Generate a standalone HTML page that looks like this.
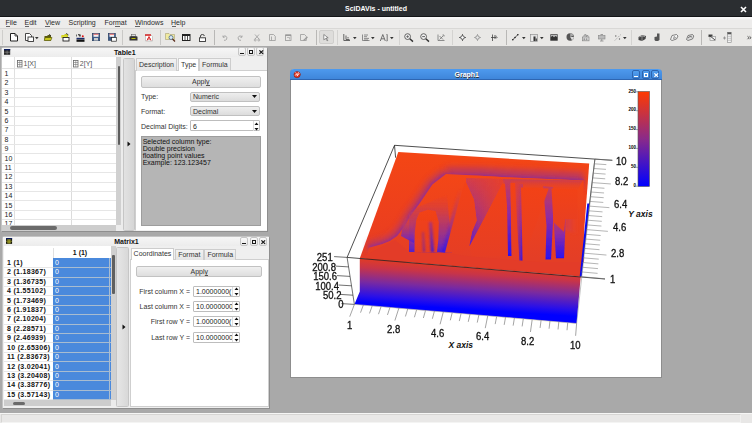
<!DOCTYPE html><html><head><meta charset="utf-8"><style>
*{box-sizing:border-box;margin:0;padding:0}
html,body{width:752px;height:423px;overflow:hidden;background:#a9a9a9;font-family:"Liberation Sans",sans-serif;font-size:7px;color:#222}
.a{position:absolute}
.t{position:absolute;white-space:nowrap;line-height:1}
.wbtn{position:absolute;border:1px solid #c6c6c6;border-radius:2px;background:linear-gradient(#fafafa,#e8e8e8)}
svg{position:absolute;overflow:visible}
</style></head><body>
<div class="a" style="left:0px;top:0px;width:752px;height:17px;background:#2b2e31"></div>
<div class="t" style="left:345px;top:5.30px;font-size:7px;font-weight:bold;color:#fff;">SciDAVis - untitled</div>
<svg style="left:740px;top:6px" width="7" height="7"><path d="M1 1L6 6M6 1L1 6" stroke="#fff" stroke-width="1.6"/></svg>
<div class="a" style="left:0px;top:17px;width:752px;height:11px;background:linear-gradient(#fafafa 0px,#f6f6f5 2px,#edeceb 3px)"></div>
<div class="a" style="left:0px;top:16px;width:752px;height:1px;background:#141618"></div>
<div class="t" style="left:5.5px;top:19.00px;font-size:7px;color:#2a2a2a;">File</div>
<div class="t" style="left:24.5px;top:19.00px;font-size:7px;color:#2a2a2a;">Edit</div>
<div class="t" style="left:45px;top:19.00px;font-size:7px;color:#2a2a2a;">View</div>
<div class="t" style="left:68.5px;top:19.00px;font-size:7px;color:#2a2a2a;">Scripting</div>
<div class="t" style="left:104.5px;top:19.00px;font-size:7px;color:#2a2a2a;">Format</div>
<div class="t" style="left:135px;top:19.00px;font-size:7px;color:#2a2a2a;">Windows</div>
<div class="t" style="left:171px;top:19.00px;font-size:7px;color:#2a2a2a;">Help</div>
<div class="a" style="left:5.5px;top:26px;width:4.0px;height:0.8px;background:#666"></div>
<div class="a" style="left:24.5px;top:26px;width:4.300000000000001px;height:0.8px;background:#666"></div>
<div class="a" style="left:45px;top:26px;width:5.299999999999997px;height:0.8px;background:#666"></div>
<div class="a" style="left:115px;top:26px;width:5.299999999999997px;height:0.8px;background:#666"></div>
<div class="a" style="left:135px;top:26px;width:5.300000000000011px;height:0.8px;background:#666"></div>
<div class="a" style="left:171.5px;top:26px;width:4.0px;height:0.8px;background:#666"></div>
<div class="a" style="left:0px;top:28px;width:752px;height:18px;background:#e9e8e6;border-top:1px solid #d9d8d6"></div>
<div class="a" style="left:2.3px;top:29.5px;width:1px;height:15px;background:#cfcecc"></div>
<svg style="left:9.5px;top:33px" width="8" height="8.5" viewBox="0 0 8 8.5"><path d="M0.5 0.5H5L7.5 3V8H0.5Z" fill="#fff" stroke="#222" stroke-width="1"/><path d="M5 0.5V3H7.5" fill="none" stroke="#222" stroke-width="0.8"/></svg>
<svg style="left:24.5px;top:33px" width="9" height="9" viewBox="0 0 9 9"><path d="M0.5 0.5H4.5L6.5 2.5V7.5H0.5Z" fill="#fff" stroke="#333" stroke-width="0.9"/><rect x="3" y="4" width="5.5" height="4.5" fill="#fff" stroke="#333" stroke-width="0.9"/></svg>
<svg style="left:34.5px;top:37px" width="4" height="2.5" viewBox="0 0 4 2.5"><path d="M0 0H3.6L1.8 2.2Z" fill="#333"/></svg>
<svg style="left:43.5px;top:34px" width="8.5" height="7" viewBox="0 0 8.5 7"><path d="M0.5 2H3L4 1H7V6.5H0.5Z" fill="#5a5a10"/><path d="M1 3.5H8L6.8 6.5H0.3Z" fill="#c8c820" stroke="#4a4a00" stroke-width="0.6"/><path d="M5 0.2L7 1.8" stroke="#333" stroke-width="0.8"/></svg>
<svg style="left:60.5px;top:33px" width="8.5" height="8.5" viewBox="0 0 8.5 8.5"><path d="M0.5 2H3L4 1H7V5H0.5Z" fill="#c8c820"/><path d="M0.5 2.5H6L5 5H0.5Z" fill="#e0e030"/><rect x="2" y="4.5" width="6" height="3.5" fill="#fff" stroke="#222" stroke-width="0.9"/><path d="M5 0.3L7.5 2" stroke="#333" stroke-width="0.8"/></svg>
<svg style="left:75.5px;top:33.5px" width="9" height="8" viewBox="0 0 9 8"><path d="M0.5 0.5V2.5M2 0.5H3.5V2.5M4.5 0.5V2.5" stroke="#333" stroke-width="0.7"/><circle cx="6.8" cy="2.2" r="1" fill="#e01010"/><rect x="0.5" y="3.8" width="8" height="1.5" fill="#1a2a6a"/><rect x="0.5" y="5.5" width="8" height="2.3" fill="#111"/></svg>
<svg style="left:92px;top:33.3px" width="8" height="8" viewBox="0 0 8 8"><rect x="0.3" y="0.3" width="7.4" height="7.4" fill="#3a5a8a" stroke="#233a5a" stroke-width="0.6"/><rect x="1.5" y="0.8" width="5" height="3" fill="#f4f0f0"/><rect x="1.5" y="0.8" width="5" height="0.8" fill="#e04040"/><rect x="2" y="5" width="4" height="2.5" fill="#ccc"/></svg>
<svg style="left:108px;top:33.3px" width="8.5" height="8.5" viewBox="0 0 8.5 8.5"><rect x="0.3" y="0.3" width="7" height="7" fill="#3a5a8a" stroke="#233a5a" stroke-width="0.6"/><rect x="1.5" y="0.8" width="4.6" height="3" fill="#f4f0f0"/><rect x="1.5" y="0.8" width="4.6" height="0.8" fill="#e04040"/><rect x="3.5" y="4.5" width="4.8" height="3.7" fill="#fff" stroke="#222" stroke-width="0.7"/></svg>
<div class="a" style="left:122.4px;top:29.5px;width:1px;height:15px;background:#c9c8c6"></div>
<svg style="left:128.5px;top:33.5px" width="9" height="7" viewBox="0 0 9 7"><rect x="2.5" y="0.3" width="4" height="2.5" fill="#ddd" stroke="#555" stroke-width="0.5"/><path d="M0.5 3Q0.5 2.3 1.5 2.3H7.5Q8.5 2.3 8.5 3V6.5H0.5Z" fill="#333"/><rect x="2.5" y="4" width="4" height="0.9" fill="#cc0"/></svg>
<svg style="left:145px;top:33.5px" width="8" height="7.5" viewBox="0 0 8 7.5"><path d="M0.5 0.5H5.5L7.5 2.5V7H0.5Z" fill="#fff" stroke="#aaa" stroke-width="0.6"/><rect x="0" y="0.3" width="6" height="1.5" fill="#d82020"/><path d="M2 6.5L4 2.5L6 6.5M2.5 5H5.5" stroke="#d82020" stroke-width="0.9" fill="none"/></svg>
<div class="a" style="left:159.5px;top:29.5px;width:1px;height:15px;background:#c9c8c6"></div>
<svg style="left:165px;top:32px" width="11" height="10" viewBox="0 0 11 10"><path d="M0.5 1.5H4L5 2.5H9.5V7.5H0.5Z" fill="#f0eaa0" stroke="#aaa070" stroke-width="0.6"/><circle cx="6" cy="5.5" r="2" fill="#d8e8f8" stroke="#4a6a8a" stroke-width="0.8"/><path d="M7.5 7L10 9.5" stroke="#5a2a1a" stroke-width="1.3"/></svg>
<svg style="left:181.8px;top:34px" width="8.5" height="7" viewBox="0 0 8.5 7"><rect x="0.5" y="0.5" width="7.5" height="6" fill="#fff" stroke="#222" stroke-width="1"/><rect x="0.5" y="0.5" width="7.5" height="1.5" fill="#222"/><path d="M3 2V6.5M5.5 2V6.5" stroke="#222" stroke-width="0.8"/></svg>
<svg style="left:198.8px;top:33.5px" width="7" height="8" viewBox="0 0 7 8"><path d="M1.5 3.5V2Q1.5 0.5 3.5 0.5Q5.3 0.5 5.3 2" fill="none" stroke="#333" stroke-width="0.9"/><rect x="0.5" y="3.8" width="6" height="3.7" fill="#fff" stroke="#333" stroke-width="0.9"/></svg>
<div class="a" style="left:213.7px;top:29.5px;width:1px;height:15px;background:#b9b8b6"></div>
<svg style="left:221.7px;top:34px" width="6" height="7" viewBox="0 0 6 7"><path d="M1 1.5L1 3.2L2.7 3.2" fill="none" stroke="#9a9a9a" stroke-width="0.8"/><path d="M1.2 3Q2.5 1.3 4 2.2Q5.5 3.5 4.5 5.5Q3.5 6.5 2 6.3" fill="none" stroke="#9a9a9a" stroke-width="0.8"/></svg>
<svg style="left:237px;top:34px" width="6" height="7" viewBox="0 0 6 7"><path d="M5 1.5L5 3.2L3.3 3.2" fill="none" stroke="#9a9a9a" stroke-width="0.8"/><path d="M4.8 3Q3.5 1.3 2 2.2Q0.5 3.5 1.5 5.5Q2.5 6.5 4 6.3" fill="none" stroke="#9a9a9a" stroke-width="0.8"/></svg>
<svg style="left:253.5px;top:34px" width="6" height="7.5" viewBox="0 0 6 7.5"><path d="M1 0.5L5 5M5 0.5L1 5" stroke="#9a9a9a" stroke-width="0.8"/><circle cx="1.2" cy="6" r="1" fill="none" stroke="#9a9a9a" stroke-width="0.7"/><circle cx="4.8" cy="6" r="1" fill="none" stroke="#9a9a9a" stroke-width="0.7"/></svg>
<svg style="left:269px;top:34px" width="7" height="7" viewBox="0 0 7 7"><path d="M0.5 0.5H4.5L6.3 2.3V6.5H0.5Z" fill="none" stroke="#9a9a9a" stroke-width="0.8"/><path d="M2.5 2.5V6.5" stroke="#9a9a9a" stroke-width="0.8"/></svg>
<svg style="left:284.8px;top:34px" width="6.5" height="7" viewBox="0 0 6.5 7"><rect x="0.5" y="1" width="5.5" height="5.5" fill="none" stroke="#9a9a9a" stroke-width="0.8"/><rect x="0.5" y="0.5" width="5.5" height="1.5" fill="#9a9a9a"/><path d="M2 3.5H4.5V5.5" stroke="#9a9a9a" stroke-width="0.6" fill="none"/></svg>
<svg style="left:300px;top:34px" width="8.5" height="7.5" viewBox="0 0 8.5 7.5"><path d="M0.5 0.5H4.5L6.3 2.3V6.5H0.5Z" fill="none" stroke="#9a9a9a" stroke-width="0.8"/><path d="M3.5 6.5L7.5 3" stroke="#9a9a9a" stroke-width="1.2"/></svg>
<div class="a" style="left:315.5px;top:29.5px;width:1px;height:15px;background:#b9b8b6"></div>
<div class="a" style="left:318.5px;top:29.7px;width:15.5px;height:14.5px;background:#dedddb;border:1px solid #cfcecc;border-radius:2px"></div>
<svg style="left:323.3px;top:34px" width="6" height="7" viewBox="0 0 6 7"><path d="M0.8 0.5L5.2 3.8L3.2 4L4.8 6.5L4 6.8L2.5 4.5L0.8 5.8Z" fill="#fff" stroke="#555" stroke-width="0.6"/></svg>
<div class="a" style="left:336.8px;top:29.5px;width:1px;height:15px;background:#d4d3d1"></div>
<svg style="left:343.3px;top:34px" width="7.5" height="7" viewBox="0 0 7.5 7"><path d="M0.8 0V6.5H7M3 1.5V5.5H6.5M5 3V4.5" fill="none" stroke="#555" stroke-width="0.9"/></svg>
<svg style="left:352.7px;top:36.5px" width="4" height="2.5" viewBox="0 0 4 2.5"><path d="M0 0H3.6L1.8 2.2Z" fill="#333"/></svg>
<svg style="left:361.9px;top:34px" width="7.5" height="7" viewBox="0 0 7.5 7"><path d="M0.5 0.5V6.5H7.5M2 1H6M2 2.7H5M2 4.4H7M2 6H6" fill="none" stroke="#666" stroke-width="0.7"/></svg>
<svg style="left:371.2px;top:36.5px" width="4" height="2.5" viewBox="0 0 4 2.5"><path d="M0 0H3.6L1.8 2.2Z" fill="#333"/></svg>
<svg style="left:380px;top:34px" width="7.5" height="7.5" viewBox="0 0 7.5 7.5"><path d="M0.3 7L2.8 0.5L5.3 7M1.2 4.8H4.4M6.5 0.5H7.2V7H6.5" fill="none" stroke="#555" stroke-width="0.8"/></svg>
<svg style="left:390.2px;top:36.5px" width="4" height="2.5" viewBox="0 0 4 2.5"><path d="M0 0H3.6L1.8 2.2Z" fill="#333"/></svg>
<div class="a" style="left:398.5px;top:29.5px;width:1px;height:15px;background:#d4d3d1"></div>
<svg style="left:404px;top:33px" width="10" height="9" viewBox="0 0 10 9"><circle cx="3.6" cy="3.6" r="2.9" fill="#f0f0f0" stroke="#555" stroke-width="0.9"/><path d="M2.2 3.6H5M3.6 2.2V5" stroke="#555" stroke-width="0.7"/><path d="M5.8 5.8L9 8.6" stroke="#333" stroke-width="1.4"/></svg>
<svg style="left:420px;top:33px" width="10" height="9" viewBox="0 0 10 9"><circle cx="3.6" cy="3.6" r="2.9" fill="#f0f0f0" stroke="#555" stroke-width="0.9"/><path d="M2.2 3.6H5" stroke="#555" stroke-width="0.9"/><path d="M5.8 5.8L9 8.6" stroke="#333" stroke-width="1.4"/></svg>
<svg style="left:437px;top:34px" width="8" height="7.5" viewBox="0 0 8 7.5"><path d="M1 0.5V6.5H7.5M2.5 2L6 5.5M6 2L2.5 5.5M5.5 1H7V2.5" fill="none" stroke="#666" stroke-width="0.7"/></svg>
<div class="a" style="left:451.6px;top:29.5px;width:1px;height:15px;background:#d4d3d1"></div>
<svg style="left:458.8px;top:33.5px" width="7" height="7" viewBox="0 0 7 7"><circle cx="3.5" cy="3.5" r="1.8" fill="#fff" stroke="#444" stroke-width="0.9"/><path d="M3.5 0V1.5M3.5 5.5V7M0 3.5H1.5M5.5 3.5H7" stroke="#444" stroke-width="0.8"/></svg>
<svg style="left:474.2px;top:33.5px" width="7.5" height="7" viewBox="0 0 7.5 7"><circle cx="3.5" cy="3.5" r="1.8" fill="#e8e8e8" stroke="#888" stroke-width="0.9"/><path d="M3.5 0V1.5M3.5 5.5V7M0 3.5H1.5M5.5 3.5H7" stroke="#999" stroke-width="0.8"/></svg>
<svg style="left:490px;top:33.5px" width="8" height="7.5" viewBox="0 0 8 7.5"><path d="M2.5 0.5V7M1 3.5H7.5M5 1V5" stroke="#444" stroke-width="0.8"/><path d="M4.5 2H6.5V4.5" stroke="#999" stroke-width="0.9" fill="none"/></svg>
<div class="a" style="left:505.7px;top:29.5px;width:1px;height:15px;background:#b9b8b6"></div>
<svg style="left:512.4px;top:34px" width="6.5" height="6.5" viewBox="0 0 6.5 6.5"><path d="M0.5 6L3 3.5L6 0.5" stroke="#333" stroke-width="0.8"/><circle cx="0.8" cy="5.8" r="0.8" fill="#222"/><circle cx="3" cy="3.5" r="0.8" fill="#222"/><circle cx="5.8" cy="0.8" r="0.8" fill="#222"/></svg>
<svg style="left:521.6px;top:36.5px" width="4" height="2.5" viewBox="0 0 4 2.5"><path d="M0 0H3.6L1.8 2.2Z" fill="#333"/></svg>
<svg style="left:530.4px;top:33.5px" width="8" height="7.7" viewBox="0 0 8 7.7"><rect x="0.4" y="0.4" width="7.2" height="7" fill="#ddd" stroke="#888" stroke-width="0.6"/><rect x="1.5" y="1.5" width="2" height="5.5" fill="#eee"/><rect x="3.5" y="2.5" width="2" height="4.5" fill="#333"/><rect x="5.5" y="4.5" width="1.5" height="2.5" fill="#555"/></svg>
<svg style="left:540.2px;top:36.5px" width="4" height="2.5" viewBox="0 0 4 2.5"><path d="M0 0H3.6L1.8 2.2Z" fill="#333"/></svg>
<svg style="left:550px;top:34px" width="8" height="7" viewBox="0 0 8 7"><rect x="0.3" y="0.3" width="7.4" height="6.4" fill="#333"/><path d="M0.8 1H7.2V3L5.5 2L4 3.2L2.5 1.8L0.8 3Z" fill="#bbb"/></svg>
<svg style="left:565.7px;top:33px" width="8.5" height="8" viewBox="0 0 8.5 8"><circle cx="4.2" cy="4" r="3.7" fill="#555"/><path d="M4.2 4L7.9 4A3.7 3.7 0 0 1 6 7.3Z" fill="#ddd"/><path d="M4.2 4L4.2 0.3A3.7 3.7 0 0 1 7.6 2.5Z" fill="#aaa"/></svg>
<svg style="left:581.9px;top:34px" width="7.5" height="7" viewBox="0 0 7.5 7"><rect x="0.5" y="3" width="6.5" height="3.8" fill="#ddd" stroke="#888" stroke-width="0.7"/><path d="M2 3V1L4 0.5V3M4.5 3V1.5H6V3" stroke="#888" stroke-width="0.7" fill="#ccc"/><rect x="1.5" y="4.3" width="1.5" height="2" fill="#999"/><rect x="3.8" y="4.3" width="1.5" height="2" fill="#999"/></svg>
<svg style="left:597.7px;top:34px" width="7.5" height="7.5" viewBox="0 0 7.5 7.5"><rect x="0.5" y="1.5" width="6.5" height="3.5" fill="#bbb" stroke="#888" stroke-width="0.6"/><path d="M3.75 5V7M2 7H5.5M2.5 0.5H5" stroke="#888" stroke-width="0.8"/></svg>
<svg style="left:613.5px;top:34px" width="7.5" height="7" viewBox="0 0 7.5 7"><path d="M0.8 6.5L6.8 0.5" stroke="#999" stroke-width="0.8" stroke-dasharray="1.5,1"/><circle cx="1.8" cy="2" r="0.7" fill="#666"/><circle cx="5.5" cy="5" r="0.7" fill="#666"/></svg>
<svg style="left:622.9000000000001px;top:36.5px" width="4" height="2.5" viewBox="0 0 4 2.5"><path d="M0 0H3.6L1.8 2.2Z" fill="#333"/></svg>
<div class="a" style="left:630.7px;top:29.5px;width:1px;height:15px;background:#d4d3d1"></div>
<svg style="left:637.7px;top:33.5px" width="8.5" height="7.5" viewBox="0 0 8.5 7.5"><path d="M0.5 3L4 1L8 2L7.5 5L4 7L0.5 6Z" fill="#444"/><path d="M1.5 3L4 1.8L7 2.5" stroke="#ddd" stroke-width="0.6" fill="none"/><path d="M4 2V7" stroke="#bbb" stroke-width="0.6"/></svg>
<svg style="left:654.3px;top:33px" width="6.5" height="8.5" viewBox="0 0 6.5 8.5"><path d="M3 0.5H5.5V7L4 8H1.5L0.5 7V4L3 3.5Z" fill="#555"/></svg>
<svg style="left:669.7px;top:34px" width="8.5" height="7" viewBox="0 0 8.5 7"><path d="M0.5 5.5L2 1.5L6.5 0.5L8 2L6.5 5L2 6.5Z" fill="#f4f4f4" stroke="#555" stroke-width="0.7"/><path d="M3.5 4.5L4.5 2M3.5 4.5L6 3.5" stroke="#555" stroke-width="0.6"/></svg>
<svg style="left:686px;top:34px" width="8" height="7" viewBox="0 0 8 7"><path d="M0.5 5.5L2 1.5L6.5 0.5L7.8 2L6.5 5L2 6.5Z" fill="#ddd" stroke="#555" stroke-width="0.7"/><path d="M2 4L4 2.5L6 3" stroke="#555" stroke-width="0.8" fill="none"/></svg>
<div class="a" style="left:701.3px;top:29.5px;width:1px;height:15px;background:#b9b8b6"></div>
<svg style="left:707.6px;top:34px" width="8.5" height="6.5" viewBox="0 0 8.5 6.5"><rect x="0.5" y="0.5" width="4" height="2.5" fill="#444"/><rect x="2" y="2.5" width="5.5" height="3.8" fill="#f0f0f0" stroke="#888" stroke-width="0.6"/><path d="M1.5 1.5L7 6" stroke="#222" stroke-width="0.8"/></svg>
<svg style="left:723.2px;top:32px" width="9" height="10.5" viewBox="0 0 9 10.5"><path d="M0 6H3M1.5 4.5V7.5" stroke="#888" stroke-width="0.8"/><rect x="4.5" y="0.3" width="3.7" height="10" fill="#f4f4f4" stroke="#888" stroke-width="0.6"/><rect x="4.5" y="0.3" width="3.7" height="2" fill="#555"/><path d="M4.5 4.3H8.2M4.5 6.3H8.2M4.5 8.3H8.2" stroke="#999" stroke-width="0.5"/></svg>
<svg style="left:746.5px;top:35.5px" width="5" height="3.5" viewBox="0 0 5 3.5"><path d="M0.5 0.3L2 1.7L0.5 3.2M2.5 0.3L4 1.7L2.5 3.2" fill="none" stroke="#333" stroke-width="0.8"/></svg>
<div class="a" style="left:0px;top:412.8px;width:752px;height:10.2px;background:#e8e7e6;border-top:1px solid #f6f6f5"></div>
<div class="a" style="left:1px;top:414px;width:740px;height:8.5px;border:1px solid #d6d5d3;border-bottom-color:#f4f4f3;border-right-color:#f0f0ef;background:#e9e8e7"></div>
<div class="a" style="left:1px;top:47px;width:267px;height:185px;background:#efefef;border:1px solid #c4c4c4;border-right-color:#8e8e8e;border-bottom-color:#8e8e8e;border-radius:3px 3px 0 0"></div>
<div class="a" style="left:2px;top:48px;width:265px;height:9px;background:linear-gradient(#f6f6f6,#ececec)"></div>
<div class="t" style="left:114px;top:48.80px;font-size:7px;font-weight:bold;color:#111;">Table1</div>
<svg style="left:3.8px;top:49px" width="6.2" height="5.8" viewBox="0 0 6.2 5.8"><rect x="0" y="0" width="6.2" height="5.8" fill="#2a2a2a"/><rect x="0" y="0" width="6.2" height="1.3" fill="#0a1a5a"/><path d="M0.3 3.2H5.9M3.1 1.5V5.5" stroke="#9a9a9a" stroke-width="0.6"/></svg>
<div class="wbtn" style="left:238px;top:47px;width:8.2px;height:8.8px;"></div>
<div class="a" style="left:240.1px;top:52.5px;width:3.9px;height:1.3px;background:#1a1a1a"></div>
<div class="wbtn" style="left:247px;top:47px;width:8.2px;height:8.8px;"></div>
<div class="a" style="left:249px;top:50px;width:4.2px;height:3.8px;border:1px solid #1a1a1a;border-top-width:1.5px"></div>
<div class="wbtn" style="left:256.3px;top:47px;width:8.2px;height:8.8px;"></div>
<svg style="left:258.6px;top:49.7px" width="4.5" height="4.3" viewBox="0 0 4.5 4.3"><path d="M0.4 0.4L4.1 3.9M4.1 0.4L0.4 3.9" stroke="#1a1a1a" stroke-width="1.3"/></svg>
<div class="a" style="left:2px;top:57px;width:114px;height:168px;background:#fff"></div>
<div class="a" style="left:2px;top:57px;width:114px;height:12px;background:#fff;border-bottom:1px solid #e2e2e2"></div>
<div class="a" style="left:14px;top:57px;width:1px;height:168px;background:#e0e0e0"></div>
<div class="a" style="left:71px;top:57px;width:1px;height:168px;background:#dcdcdc"></div>
<div class="t" style="left:23.5px;top:60.00px;font-size:7px;color:#555;">1[X]</div>
<div class="t" style="left:79.8px;top:60.00px;font-size:7px;color:#555;">2[Y]</div>
<svg style="left:17px;top:60px" width="5.5" height="7.5" viewBox="0 0 5.5 7.5"><rect x="0.5" y="0.5" width="4.5" height="6.5" fill="#fff" stroke="#666" stroke-width="0.8"/><path d="M2.75 0.5V7M0.5 2.5H5M0.5 4.5H5" stroke="#777" stroke-width="0.6"/></svg>
<svg style="left:73.3px;top:60px" width="5.5" height="7.5" viewBox="0 0 5.5 7.5"><rect x="0.5" y="0.5" width="4.5" height="6.5" fill="#fff" stroke="#666" stroke-width="0.8"/><path d="M2.75 0.5V7M0.5 2.5H5M0.5 4.5H5" stroke="#777" stroke-width="0.6"/></svg>
<div class="a" style="left:2px;top:78.3px;width:114px;height:1px;background:#e6e6e6"></div>
<div class="t" style="left:4.5px;top:70.10px;font-size:7px;color:#222;">1</div>
<div class="a" style="left:2px;top:87.69px;width:114px;height:1px;background:#e6e6e6"></div>
<div class="t" style="left:4.5px;top:79.49px;font-size:7px;color:#222;">2</div>
<div class="a" style="left:2px;top:97.08px;width:114px;height:1px;background:#e6e6e6"></div>
<div class="t" style="left:4.5px;top:88.88px;font-size:7px;color:#222;">3</div>
<div class="a" style="left:2px;top:106.47px;width:114px;height:1px;background:#e6e6e6"></div>
<div class="t" style="left:4.5px;top:98.27px;font-size:7px;color:#222;">4</div>
<div class="a" style="left:2px;top:115.86px;width:114px;height:1px;background:#e6e6e6"></div>
<div class="t" style="left:4.5px;top:107.66px;font-size:7px;color:#222;">5</div>
<div class="a" style="left:2px;top:125.25px;width:114px;height:1px;background:#e6e6e6"></div>
<div class="t" style="left:4.5px;top:117.05px;font-size:7px;color:#222;">6</div>
<div class="a" style="left:2px;top:134.64px;width:114px;height:1px;background:#e6e6e6"></div>
<div class="t" style="left:4.5px;top:126.44px;font-size:7px;color:#222;">7</div>
<div class="a" style="left:2px;top:144.02999999999997px;width:114px;height:1px;background:#e6e6e6"></div>
<div class="t" style="left:4.5px;top:135.83px;font-size:7px;color:#222;">8</div>
<div class="a" style="left:2px;top:153.42px;width:114px;height:1px;background:#e6e6e6"></div>
<div class="t" style="left:4.5px;top:145.22px;font-size:7px;color:#222;">9</div>
<div class="a" style="left:2px;top:162.81px;width:114px;height:1px;background:#e6e6e6"></div>
<div class="t" style="left:4.5px;top:154.61px;font-size:7px;color:#222;">10</div>
<div class="a" style="left:2px;top:172.2px;width:114px;height:1px;background:#e6e6e6"></div>
<div class="t" style="left:4.5px;top:164.00px;font-size:7px;color:#222;">11</div>
<div class="a" style="left:2px;top:181.58999999999997px;width:114px;height:1px;background:#e6e6e6"></div>
<div class="t" style="left:4.5px;top:173.39px;font-size:7px;color:#222;">12</div>
<div class="a" style="left:2px;top:190.98px;width:114px;height:1px;background:#e6e6e6"></div>
<div class="t" style="left:4.5px;top:182.78px;font-size:7px;color:#222;">13</div>
<div class="a" style="left:2px;top:200.37px;width:114px;height:1px;background:#e6e6e6"></div>
<div class="t" style="left:4.5px;top:192.17px;font-size:7px;color:#222;">14</div>
<div class="a" style="left:2px;top:209.76px;width:114px;height:1px;background:#e6e6e6"></div>
<div class="t" style="left:4.5px;top:201.56px;font-size:7px;color:#222;">15</div>
<div class="a" style="left:2px;top:219.15px;width:114px;height:1px;background:#e6e6e6"></div>
<div class="t" style="left:4.5px;top:210.95px;font-size:7px;color:#222;">16</div>
<div class="a" style="left:2px;top:228.54px;width:114px;height:1px;background:#e6e6e6"></div>
<div class="t" style="left:4.5px;top:220.34px;font-size:7px;color:#222;">17</div>
<div class="a" style="left:116px;top:57px;width:5.3px;height:168px;background:#d0d0d0"></div>
<div class="a" style="left:117.5px;top:65.5px;width:2.5px;height:79px;background:#5d5d5d;border-radius:1px"></div>
<div class="a" style="left:2px;top:225px;width:114px;height:5.5px;background:#cdcdcd"></div>
<div class="a" style="left:10px;top:226px;width:47px;height:3.5px;background:#6a6a6a;border-radius:2px"></div>
<div class="a" style="left:116px;top:225px;width:5.3px;height:6px;background:#ececec"></div>
<div class="a" style="left:121.3px;top:57px;width:1.5px;height:174px;background:#ececec"></div>
<div class="a" style="left:122.8px;top:58px;width:11.8px;height:172.7px;background:linear-gradient(90deg,#e2e2e2,#d6d6d6);border:1px solid #c6c6c6;border-radius:1.5px"></div>
<svg style="left:127px;top:141px" width="4" height="6"><path d="M0.5 0.5L3.5 3L0.5 5.5Z" fill="#111"/></svg>
<div class="a" style="left:135px;top:58px;width:131px;height:173px;background:#efefef"></div>
<div class="a" style="left:135px;top:70px;width:132px;height:161px;background:#fff;border-left:1px solid #cfcfcf;border-top:1px solid #cfcfcf;border-bottom:1px solid #f0f0f0"></div>
<div class="a" style="left:136px;top:58px;width:41px;height:12.5px;background:linear-gradient(#f2f2f2,#e4e4e4);border:1px solid #cdcdcd;border-bottom:none"></div>
<div class="a" style="left:177.5px;top:57.5px;width:21px;height:13px;background:#fff;border:1px solid #cdcdcd;border-bottom:none"></div>
<div class="a" style="left:199px;top:58px;width:32px;height:12.5px;background:linear-gradient(#f2f2f2,#e4e4e4);border:1px solid #cdcdcd;border-bottom:none"></div>
<div class="t" style="left:139px;top:60.80px;font-size:7px;color:#333;">Description</div>
<div class="t" style="left:181px;top:60.50px;font-size:7px;color:#333;">Type</div>
<div class="t" style="left:202px;top:60.80px;font-size:7px;color:#333;">Formula</div>
<div class="a" style="left:141px;top:75.5px;width:120px;height:12px;background:linear-gradient(#f0f0f0,#dedede);border:1px solid #c2c2c2;border-radius:2px"></div>
<div class="t" style="left:192px;top:78.00px;font-size:7px;color:#333;">Apply</div>
<div class="a" style="left:206px;top:85.2px;width:3.5px;height:0.8px;background:#555"></div>
<div class="t" style="left:141px;top:93.10px;font-size:7px;color:#333;">Type:</div>
<div class="t" style="left:141px;top:107.80px;font-size:7px;color:#333;">Format:</div>
<div class="t" style="left:141px;top:122.50px;font-size:7px;color:#333;">Decimal Digits:</div>
<div class="a" style="left:190px;top:91.5px;width:70px;height:10px;background:linear-gradient(#eeeeee,#dcdcdc);border:1px solid #c0c0c0;border-radius:2px"></div>
<div class="t" style="left:193px;top:93.00px;font-size:7px;color:#333;">Numeric</div>
<svg style="left:252px;top:95.3px" width="5" height="3"><path d="M0 0H5L2.5 3Z" fill="#111"/></svg>
<div class="a" style="left:190px;top:106px;width:70px;height:10px;background:linear-gradient(#eeeeee,#dcdcdc);border:1px solid #c0c0c0;border-radius:2px"></div>
<div class="t" style="left:193px;top:107.50px;font-size:7px;color:#333;">Decimal</div>
<svg style="left:252px;top:109.8px" width="5" height="3"><path d="M0 0H5L2.5 3Z" fill="#111"/></svg>
<div class="a" style="left:190px;top:120.3px;width:70px;height:11px;background:#fff;border:1px solid #bdbdbd;border-radius:1px"></div>
<div class="t" style="left:193px;top:122.50px;font-size:7px;color:#222;">6</div>
<div class="a" style="left:252.5px;top:121px;width:0.8px;height:10px;background:#ddd"></div>
<svg style="left:254px;top:122px" width="5" height="9"><path d="M0.5 3H4.5L2.5 0.5Z M0.5 6H4.5L2.5 8.5Z" fill="#111"/></svg>
<div class="a" style="left:140.5px;top:135.5px;width:120px;height:90px;background:#b5b5b5;border:1px solid #9d9d9d"></div>
<div class="t" style="left:142.7px;top:137.80px;font-size:7px;color:#111;">Selected column type:</div>
<div class="t" style="left:142.7px;top:144.87px;font-size:7px;color:#111;">Double precision</div>
<div class="t" style="left:142.7px;top:151.94px;font-size:7px;color:#111;">floating point values</div>
<div class="t" style="left:142.7px;top:159.01px;font-size:7px;color:#111;">Example: 123.123457</div>
<div class="a" style="left:2px;top:236px;width:268px;height:173px;background:#efefef;border:1px solid #c4c4c4;border-right-color:#8e8e8e;border-bottom-color:#8e8e8e;border-radius:3px 3px 0 0"></div>
<div class="a" style="left:3px;top:237px;width:266px;height:9px;background:linear-gradient(#f6f6f6,#ececec)"></div>
<div class="t" style="left:114.2px;top:238.00px;font-size:7px;font-weight:bold;color:#111;">Matrix1</div>
<svg style="left:6px;top:238px" width="6.1" height="5.9" viewBox="0 0 6.1 5.9"><rect x="0" y="0" width="6.1" height="5.9" fill="#1a1a10"/><rect x="0" y="0" width="6.1" height="1.3" fill="#0a1a5a"/><path d="M0.3 3.3H5.8M3.05 1.5V5.6M1 2H5M1 4.8H5" stroke="#c8c830" stroke-width="0.7"/></svg>
<div class="wbtn" style="left:240.3px;top:237px;width:8.2px;height:8.8px;"></div>
<div class="a" style="left:242.4px;top:242.5px;width:3.9px;height:1.3px;background:#1a1a1a"></div>
<div class="wbtn" style="left:249.8px;top:237px;width:8.2px;height:8.8px;"></div>
<div class="a" style="left:251.8px;top:240px;width:4.2px;height:3.8px;border:1px solid #1a1a1a;border-top-width:1.5px"></div>
<div class="wbtn" style="left:259.1px;top:237px;width:8.2px;height:8.8px;"></div>
<svg style="left:261.40000000000003px;top:239.7px" width="4.5" height="4.3" viewBox="0 0 4.5 4.3"><path d="M0.4 0.4L4.1 3.9M4.1 0.4L0.4 3.9" stroke="#1a1a1a" stroke-width="1.3"/></svg>
<div class="a" style="left:4px;top:246px;width:111px;height:154px;background:#fff"></div>
<div class="a" style="left:52.5px;top:247.5px;width:58px;height:10.5px;background:#fff;border-left:1px solid #e0e0e0"></div>
<div class="t" style="left:80px;top:249.10px;font-size:7px;font-weight:bold;color:#111;;transform:translateX(-50%)">1 (1)</div>
<div class="a" style="left:52.5px;top:258px;width:58px;height:142px;background:#4a89dc"></div>
<div class="a" style="left:4px;top:267.09999999999997px;width:48.5px;height:1px;background:#e8e8e8"></div>
<div class="a" style="left:52.5px;top:267.09999999999997px;width:58px;height:1px;background:#a8bcd0"></div>
<div class="t" style="left:7px;top:258.90px;font-size:7px;font-weight:bold;color:#111;;letter-spacing:0.3px">1 (1)</div>
<div class="t" style="left:55px;top:258.90px;font-size:7px;color:#fff;">0</div>
<div class="a" style="left:4px;top:276.52px;width:48.5px;height:1px;background:#e8e8e8"></div>
<div class="a" style="left:52.5px;top:276.52px;width:58px;height:1px;background:#a8bcd0"></div>
<div class="t" style="left:7px;top:268.32px;font-size:7px;font-weight:bold;color:#111;;letter-spacing:0.3px">2 (1.18367)</div>
<div class="t" style="left:55px;top:268.32px;font-size:7px;color:#fff;">0</div>
<div class="a" style="left:4px;top:285.93999999999994px;width:48.5px;height:1px;background:#e8e8e8"></div>
<div class="a" style="left:52.5px;top:285.93999999999994px;width:58px;height:1px;background:#a8bcd0"></div>
<div class="t" style="left:7px;top:277.74px;font-size:7px;font-weight:bold;color:#111;;letter-spacing:0.3px">3 (1.36735)</div>
<div class="t" style="left:55px;top:277.74px;font-size:7px;color:#fff;">0</div>
<div class="a" style="left:4px;top:295.35999999999996px;width:48.5px;height:1px;background:#e8e8e8"></div>
<div class="a" style="left:52.5px;top:295.35999999999996px;width:58px;height:1px;background:#a8bcd0"></div>
<div class="t" style="left:7px;top:287.16px;font-size:7px;font-weight:bold;color:#111;;letter-spacing:0.3px">4 (1.55102)</div>
<div class="t" style="left:55px;top:287.16px;font-size:7px;color:#fff;">0</div>
<div class="a" style="left:4px;top:304.78px;width:48.5px;height:1px;background:#e8e8e8"></div>
<div class="a" style="left:52.5px;top:304.78px;width:58px;height:1px;background:#a8bcd0"></div>
<div class="t" style="left:7px;top:296.58px;font-size:7px;font-weight:bold;color:#111;;letter-spacing:0.3px">5 (1.73469)</div>
<div class="t" style="left:55px;top:296.58px;font-size:7px;color:#fff;">0</div>
<div class="a" style="left:4px;top:314.2px;width:48.5px;height:1px;background:#e8e8e8"></div>
<div class="a" style="left:52.5px;top:314.2px;width:58px;height:1px;background:#a8bcd0"></div>
<div class="t" style="left:7px;top:306.00px;font-size:7px;font-weight:bold;color:#111;;letter-spacing:0.3px">6 (1.91837)</div>
<div class="t" style="left:55px;top:306.00px;font-size:7px;color:#fff;">0</div>
<div class="a" style="left:4px;top:323.61999999999995px;width:48.5px;height:1px;background:#e8e8e8"></div>
<div class="a" style="left:52.5px;top:323.61999999999995px;width:58px;height:1px;background:#a8bcd0"></div>
<div class="t" style="left:7px;top:315.42px;font-size:7px;font-weight:bold;color:#111;;letter-spacing:0.3px">7 (2.10204)</div>
<div class="t" style="left:55px;top:315.42px;font-size:7px;color:#fff;">0</div>
<div class="a" style="left:4px;top:333.03999999999996px;width:48.5px;height:1px;background:#e8e8e8"></div>
<div class="a" style="left:52.5px;top:333.03999999999996px;width:58px;height:1px;background:#a8bcd0"></div>
<div class="t" style="left:7px;top:324.84px;font-size:7px;font-weight:bold;color:#111;;letter-spacing:0.3px">8 (2.28571)</div>
<div class="t" style="left:55px;top:324.84px;font-size:7px;color:#fff;">0</div>
<div class="a" style="left:4px;top:342.46px;width:48.5px;height:1px;background:#e8e8e8"></div>
<div class="a" style="left:52.5px;top:342.46px;width:58px;height:1px;background:#a8bcd0"></div>
<div class="t" style="left:7px;top:334.26px;font-size:7px;font-weight:bold;color:#111;;letter-spacing:0.3px">9 (2.46939)</div>
<div class="t" style="left:55px;top:334.26px;font-size:7px;color:#fff;">0</div>
<div class="a" style="left:4px;top:351.87999999999994px;width:48.5px;height:1px;background:#e8e8e8"></div>
<div class="a" style="left:52.5px;top:351.87999999999994px;width:58px;height:1px;background:#a8bcd0"></div>
<div class="t" style="left:7px;top:343.68px;font-size:7px;font-weight:bold;color:#111;;letter-spacing:0.3px">10 (2.65306)</div>
<div class="t" style="left:55px;top:343.68px;font-size:7px;color:#fff;">0</div>
<div class="a" style="left:4px;top:361.29999999999995px;width:48.5px;height:1px;background:#e8e8e8"></div>
<div class="a" style="left:52.5px;top:361.29999999999995px;width:58px;height:1px;background:#a8bcd0"></div>
<div class="t" style="left:7px;top:353.10px;font-size:7px;font-weight:bold;color:#111;;letter-spacing:0.3px">11 (2.83673)</div>
<div class="t" style="left:55px;top:353.10px;font-size:7px;color:#fff;">0</div>
<div class="a" style="left:4px;top:370.71999999999997px;width:48.5px;height:1px;background:#e8e8e8"></div>
<div class="a" style="left:52.5px;top:370.71999999999997px;width:58px;height:1px;background:#a8bcd0"></div>
<div class="t" style="left:7px;top:362.52px;font-size:7px;font-weight:bold;color:#111;;letter-spacing:0.3px">12 (3.02041)</div>
<div class="t" style="left:55px;top:362.52px;font-size:7px;color:#fff;">0</div>
<div class="a" style="left:4px;top:380.13999999999993px;width:48.5px;height:1px;background:#e8e8e8"></div>
<div class="a" style="left:52.5px;top:380.13999999999993px;width:58px;height:1px;background:#a8bcd0"></div>
<div class="t" style="left:7px;top:371.94px;font-size:7px;font-weight:bold;color:#111;;letter-spacing:0.3px">13 (3.20408)</div>
<div class="t" style="left:55px;top:371.94px;font-size:7px;color:#fff;">0</div>
<div class="a" style="left:4px;top:389.55999999999995px;width:48.5px;height:1px;background:#e8e8e8"></div>
<div class="a" style="left:52.5px;top:389.55999999999995px;width:58px;height:1px;background:#a8bcd0"></div>
<div class="t" style="left:7px;top:381.36px;font-size:7px;font-weight:bold;color:#111;;letter-spacing:0.3px">14 (3.38776)</div>
<div class="t" style="left:55px;top:381.36px;font-size:7px;color:#fff;">0</div>
<div class="a" style="left:4px;top:398.97999999999996px;width:48.5px;height:1px;background:#e8e8e8"></div>
<div class="a" style="left:52.5px;top:398.97999999999996px;width:58px;height:1px;background:#a8bcd0"></div>
<div class="t" style="left:7px;top:390.78px;font-size:7px;font-weight:bold;color:#111;;letter-spacing:0.3px">15 (3.57143)</div>
<div class="t" style="left:55px;top:390.78px;font-size:7px;color:#fff;">0</div>
<div class="a" style="left:108.5px;top:258px;width:1px;height:142px;background:#a8bcd0"></div>
<div class="a" style="left:110.8px;top:246px;width:5px;height:154px;background:#d0d0d0"></div>
<div class="a" style="left:112.3px;top:254.9px;width:2.3px;height:39px;background:#606060;border-radius:1px"></div>
<div class="a" style="left:4px;top:400px;width:107px;height:6px;background:#cdcdcd"></div>
<div class="a" style="left:12.5px;top:402px;width:12.5px;height:3px;background:#6a6a6a;border-radius:2px"></div>
<div class="a" style="left:110.8px;top:400px;width:5px;height:6px;background:#ececec"></div>
<div class="a" style="left:115.8px;top:246px;width:1px;height:161px;background:#ececec"></div>
<div class="a" style="left:116.4px;top:247px;width:13px;height:159.5px;background:linear-gradient(90deg,#e6e6e6,#d8d8d8);border:1px solid #c6c6c6;border-radius:1.5px"></div>
<svg style="left:122px;top:324px" width="4" height="6"><path d="M0.5 0.5L3.5 3L0.5 5.5Z" fill="#111"/></svg>
<div class="a" style="left:130px;top:259px;width:139px;height:148px;background:#fff;border:1px solid #cfcfcf"></div>
<div class="a" style="left:131px;top:247.5px;width:43px;height:12px;background:#fff;border:1px solid #cdcdcd;border-bottom:none"></div>
<div class="a" style="left:174.5px;top:249px;width:29px;height:10.5px;background:linear-gradient(#f2f2f2,#e4e4e4);border:1px solid #cdcdcd;border-bottom:none"></div>
<div class="a" style="left:203.5px;top:249px;width:32px;height:10.5px;background:linear-gradient(#f2f2f2,#e4e4e4);border:1px solid #cdcdcd;border-bottom:none"></div>
<div class="t" style="left:133.6px;top:249.80px;font-size:7px;color:#333;">Coordinates</div>
<div class="t" style="left:178.2px;top:250.80px;font-size:7px;color:#333;">Format</div>
<div class="t" style="left:207.4px;top:250.80px;font-size:7px;color:#333;">Formula</div>
<div class="a" style="left:136px;top:265.5px;width:126px;height:11.5px;background:linear-gradient(#f0f0f0,#dedede);border:1px solid #c2c2c2;border-radius:2px"></div>
<div class="t" style="left:190.5px;top:267.60px;font-size:7px;color:#333;">Apply</div>
<div class="a" style="left:204.5px;top:274.8px;width:3.5px;height:0.8px;background:#555"></div>
<div class="t" style="right:562px;top:287.5px;color:#333">First column X =</div>
<div class="a" style="left:193px;top:285.5px;width:46.5px;height:11px;background:#fff;border:1px solid #bdbdbd;border-radius:1px;overflow:hidden"></div>
<div class="a" style="left:194px;top:286px;width:38px;height:10px;overflow:hidden"><div class="t" style="left:2px;top:1.5px;color:#222">1.0000000(</div></div>
<div class="a" style="left:232px;top:286.5px;width:0.8px;height:9px;background:#ddd"></div>
<svg style="left:233.5px;top:286.5px" width="5" height="9"><path d="M0.5 3H4.5L2.5 0.5Z M0.5 6H4.5L2.5 8.5Z" fill="#111"/></svg>
<div class="t" style="right:562px;top:303.1px;color:#333">Last column X =</div>
<div class="a" style="left:193px;top:301.1px;width:46.5px;height:11px;background:#fff;border:1px solid #bdbdbd;border-radius:1px;overflow:hidden"></div>
<div class="a" style="left:194px;top:301.6px;width:38px;height:10px;overflow:hidden"><div class="t" style="left:2px;top:1.5px;color:#222">10.0000000</div></div>
<div class="a" style="left:232px;top:302.1px;width:0.8px;height:9px;background:#ddd"></div>
<svg style="left:233.5px;top:302.1px" width="5" height="9"><path d="M0.5 3H4.5L2.5 0.5Z M0.5 6H4.5L2.5 8.5Z" fill="#111"/></svg>
<div class="t" style="right:562px;top:318.4px;color:#333">First row Y =</div>
<div class="a" style="left:193px;top:316.4px;width:46.5px;height:11px;background:#fff;border:1px solid #bdbdbd;border-radius:1px;overflow:hidden"></div>
<div class="a" style="left:194px;top:316.9px;width:38px;height:10px;overflow:hidden"><div class="t" style="left:2px;top:1.5px;color:#222">1.0000000(</div></div>
<div class="a" style="left:232px;top:317.4px;width:0.8px;height:9px;background:#ddd"></div>
<svg style="left:233.5px;top:317.4px" width="5" height="9"><path d="M0.5 3H4.5L2.5 0.5Z M0.5 6H4.5L2.5 8.5Z" fill="#111"/></svg>
<div class="t" style="right:562px;top:333.7px;color:#333">Last row Y =</div>
<div class="a" style="left:193px;top:331.7px;width:46.5px;height:11px;background:#fff;border:1px solid #bdbdbd;border-radius:1px;overflow:hidden"></div>
<div class="a" style="left:194px;top:332.2px;width:38px;height:10px;overflow:hidden"><div class="t" style="left:2px;top:1.5px;color:#222">10.0000000</div></div>
<div class="a" style="left:232px;top:332.7px;width:0.8px;height:9px;background:#ddd"></div>
<svg style="left:233.5px;top:332.7px" width="5" height="9"><path d="M0.5 3H4.5L2.5 0.5Z M0.5 6H4.5L2.5 8.5Z" fill="#111"/></svg>
<div class="a" style="left:290px;top:68.5px;width:372px;height:309.8px;background:#fff;border:1px solid #8d8d8d;border-top:none;border-radius:4px 4px 0 0"></div>
<div class="a" style="left:290px;top:68.5px;width:372px;height:11px;background:linear-gradient(#4e9aee,#3f86da);border-bottom:1px solid #2e66b2;border-radius:4px 4px 0 0"></div>
<div class="t" style="left:454.5px;top:70.50px;font-size:7px;font-weight:bold;color:#fff;;text-shadow:0.5px 0.6px 0.4px #333">Graph1</div>
<svg style="left:292.8px;top:70.8px" width="8" height="7.2" viewBox="0 0 8 7.2"><path d="M1 3.5Q1 0.8 4 0.6Q7.2 0.6 7.4 3.4Q7.2 6.6 4 6.8Q0.8 6.8 1 3.5Z" fill="#e83a2a" stroke="#7a1a10" stroke-width="0.6"/><path d="M2.2 4.5L4 2.5L4.3 4.8L6.2 2.2" stroke="#fff" stroke-width="0.9" fill="none"/><path d="M2 1.2L3 2.2M6 1L5.2 2" stroke="#fff" stroke-width="0.6"/></svg>
<div class="a" style="left:632.3px;top:70.2px;width:8.2px;height:8.8px;border:1px solid #2d64ae;border-radius:2px;background:linear-gradient(#52a0f0,#3f86da)"></div>
<div class="a" style="left:634.4px;top:75.7px;width:3.9px;height:1.3px;background:#fff"></div>
<div class="a" style="left:641.7px;top:70.2px;width:8.2px;height:8.8px;border:1px solid #2d64ae;border-radius:2px;background:linear-gradient(#52a0f0,#3f86da)"></div>
<div class="a" style="left:643.7px;top:73.2px;width:4.2px;height:3.8px;border:1px solid #fff;border-top-width:1.5px"></div>
<div class="a" style="left:651.3px;top:70.2px;width:8.2px;height:8.8px;border:1px solid #2d64ae;border-radius:2px;background:linear-gradient(#52a0f0,#3f86da)"></div>
<svg style="left:653.5999999999999px;top:72.9px" width="4.5" height="4.3" viewBox="0 0 4.5 4.3"><path d="M0.4 0.4L4.1 3.9M4.1 0.4L0.4 3.9" stroke="#fff" stroke-width="1.3"/></svg>
<svg style="left:0;top:0" width="752" height="423" viewBox="0 0 752 423"><defs><linearGradient id="gTop" gradientUnits="userSpaceOnUse" x1="0" y1="150" x2="0" y2="275"><stop offset="0" stop-color="#f44614"/><stop offset="0.6" stop-color="#ec3f1e"/><stop offset="1" stop-color="#de3b2a"/></linearGradient><linearGradient id="gFront" gradientUnits="userSpaceOnUse" x1="467" y1="267" x2="464" y2="314"><stop offset="0" stop-color="#dc3a2c"/><stop offset="0.15" stop-color="#c83448"/><stop offset="0.45" stop-color="#7a2aa0"/><stop offset="0.75" stop-color="#2a10e8"/><stop offset="0.9" stop-color="#0000ff"/><stop offset="1" stop-color="#0000ff"/></linearGradient><linearGradient id="gWall" x1="0" y1="0" x2="0" y2="1"><stop offset="0" stop-color="#e84028" stop-opacity="0"/><stop offset="0.35" stop-color="#b03a70"/><stop offset="1" stop-color="#3a18e0"/></linearGradient><linearGradient id="gWall2" x1="0" y1="0" x2="0" y2="1"><stop offset="0" stop-color="#f04018"/><stop offset="0.5" stop-color="#c03a60"/><stop offset="1" stop-color="#6a28b8"/></linearGradient><linearGradient id="gBand" x1="0" y1="0" x2="0" y2="1"><stop offset="0" stop-color="#b83c60"/><stop offset="1" stop-color="#f04018"/></linearGradient><linearGradient id="gCbar" x1="0" y1="0" x2="0" y2="1"><stop offset="0" stop-color="#ff3a00"/><stop offset="0.5" stop-color="#8a2a8a"/><stop offset="1" stop-color="#0000ff"/></linearGradient></defs><path d="M394.5 145.3L612.3 160.3M394.5 145.3L347.1 257.4M394.5 145.3L395.6 157.7M594.9 159.1L580.7 276.6" stroke="#222" stroke-width="0.8" fill="none"/><path d="M398.3 152L589.2 163.6L580.7 276.6L359.8 258.3Z" fill="url(#gTop)"/><filter id="bl" filterUnits="userSpaceOnUse" x="290" y="80" width="372" height="300"><feGaussianBlur stdDeviation="1.5"/></filter><filter id="bl2" filterUnits="userSpaceOnUse" x="290" y="80" width="372" height="300"><feGaussianBlur stdDeviation="0.6"/></filter><linearGradient id="wBand" x1="0" y1="0" x2="0" y2="1"><stop offset="0" stop-color="#a83a78" stop-opacity="1"/><stop offset="0.4" stop-color="#c83c50" stop-opacity="0.8"/><stop offset="1" stop-color="#f04018" stop-opacity="0"/></linearGradient><linearGradient id="wDiag" x1="0" y1="0" x2="1" y2="0.3"><stop offset="0" stop-color="#b83a68" stop-opacity="0.95"/><stop offset="1" stop-color="#e84028" stop-opacity="0"/></linearGradient><linearGradient id="wDeep" x1="0" y1="0" x2="0" y2="1"><stop offset="0" stop-color="#d83c40" stop-opacity="0"/><stop offset="0.35" stop-color="#a03480" stop-opacity="0.85"/><stop offset="1" stop-color="#3a1ae0" stop-opacity="1"/></linearGradient><linearGradient id="wMid" x1="0" y1="0" x2="0" y2="1"><stop offset="0" stop-color="#d83c40" stop-opacity="0"/><stop offset="0.4" stop-color="#b83a68" stop-opacity="0.75"/><stop offset="0.85" stop-color="#7a2ab0" stop-opacity="0.95"/><stop offset="1" stop-color="#5020d0" stop-opacity="1"/></linearGradient><linearGradient id="wSoft" x1="0" y1="0" x2="1" y2="0"><stop offset="0" stop-color="#c83a60" stop-opacity="0.8"/><stop offset="1" stop-color="#e84028" stop-opacity="0"/></linearGradient><linearGradient id="gRed2" x1="0" y1="0" x2="0" y2="1"><stop offset="0" stop-color="#f24216" stop-opacity="1"/><stop offset="1" stop-color="#e63e24" stop-opacity="1"/></linearGradient><filter id="bl3" filterUnits="userSpaceOnUse" x="290" y="80" width="372" height="300"><feGaussianBlur stdDeviation="2.2"/></filter><path d="M446 175.5L480 175.8L511 177.5L583.5 180.5" stroke="#a83478" stroke-width="16" fill="none" filter="url(#bl4)" opacity="0.75"/><path d="M446 175.5L480 175.8L511 177.5L583.5 180.5" stroke="#8a2c9a" stroke-width="4" fill="none" filter="url(#bl5)" opacity="0.6"/><path d="M446 175.5L480 175.8L511 177.5L583.5 180.5L583.5 262L366 262L368.9 247.8Z" fill="#ee3f1e"/><filter id="bl4" filterUnits="userSpaceOnUse" x="290" y="80" width="372" height="300"><feGaussianBlur stdDeviation="3.2"/></filter><filter id="bl5" filterUnits="userSpaceOnUse" x="290" y="80" width="372" height="300"><feGaussianBlur stdDeviation="1.3"/></filter><path d="M446 174L432.4 184.6L418.9 204.4L410.6 215.8L404.6 226.3L397.2 235.9L389.8 241.1L382.3 244.1L368.9 247.8" stroke="#a83478" stroke-width="11" fill="none" filter="url(#bl4)" opacity="0.75"/><path d="M446 174L432.4 184.6L418.9 204.4L410.6 215.8L404.6 226.3L397.2 235.9L389.8 241.1L382.3 244.1L368.9 247.8" stroke="#8a2ca0" stroke-width="4" fill="none" filter="url(#bl5)" opacity="0.6"/><linearGradient id="gIn" gradientUnits="userSpaceOnUse" x1="0" y1="175" x2="0" y2="258"><stop offset="0" stop-color="#f44616"/><stop offset="1" stop-color="#e43e26"/></linearGradient><path d="M446 174L432.4 184.6L418.9 204.4L410.6 215.8L404.6 226.3L397.2 235.9L389.8 241.1L382.3 244.1L368.9 247.8L366 262L583.5 262L583.5 180.5L511 177.5L480 175.8Z" fill="url(#gIn)"/><path d="M409 214L418 207L430 202L447 194L452 252.5L409 252Z" fill="url(#wMid)" filter="url(#bl2)"/><path d="M404 219L413 213L414 243L401 236Z" fill="url(#wMid)" filter="url(#bl2)"/><linearGradient id="wV" x1="0" y1="0" x2="0" y2="1"><stop offset="0" stop-color="#c83c58" stop-opacity="0.95"/><stop offset="0.45" stop-color="#8a2ca8" stop-opacity="1"/><stop offset="1" stop-color="#2a10f0" stop-opacity="1"/></linearGradient><linearGradient id="wV2" x1="0" y1="0" x2="0" y2="1"><stop offset="0" stop-color="#d03c50" stop-opacity="0.9"/><stop offset="0.5" stop-color="#9a3090" stop-opacity="1"/><stop offset="1" stop-color="#4a1ae0" stop-opacity="1"/></linearGradient><linearGradient id="fadeR" x1="0" y1="0" x2="1" y2="0"><stop offset="0" stop-color="#e84028" stop-opacity="0"/><stop offset="1" stop-color="#e84028" stop-opacity="0.9"/></linearGradient><linearGradient id="fadeL" x1="0" y1="0" x2="1" y2="0"><stop offset="0" stop-color="#e84028" stop-opacity="0.9"/><stop offset="1" stop-color="#e84028" stop-opacity="0"/></linearGradient><g filter="url(#bl2)"><path d="M466 178L503 179L502.3 183.5L470.1 245L469.2 246L472 231.7L476.7 220.4L473.9 199.6L466 182.6Z" fill="url(#wV2)"/><path d="M466 178L503 179L502.3 183.5L470.1 245L469.2 246L472 231.7L476.7 220.4L473.9 199.6L466 182.6Z" fill="url(#fadeR)"/></g><path d="M503 179L583 180.5L577.5 190L503 187Z" fill="url(#wSoft2)" filter="url(#bl2)"/><linearGradient id="wSoft2" x1="0" y1="0" x2="0" y2="1"><stop offset="0" stop-color="#b83a66" stop-opacity="0.8"/><stop offset="1" stop-color="#e84028" stop-opacity="0.1"/></linearGradient><path d="M504.5 180L510.5 180L511.5 256L507.5 256Z" fill="url(#wV)" filter="url(#bl2)"/><g filter="url(#bl2)"><path d="M514 183L523 184L522.7 262L519.5 262Z" fill="url(#wV)"/><path d="M514 183L523 184L522.7 262L519.5 262Z" fill="url(#fadeL)"/></g><g filter="url(#bl2)"><path d="M543 186L553 187L553 222L551 259.5L545.5 259.5L546.5 226Z" fill="url(#wV)"/></g><path d="M553.4 216L566 216L564 258.3L556 258.3Z" fill="url(#wV)" filter="url(#bl2)"/><path d="M566 208L578 208L578 235L566 230Z" fill="url(#wSoft)" filter="url(#bl)"/><path d="M414.5 252L414.8 232L416.3 220L419.5 212.5L428 209.8L435.5 211L438.8 222L438.3 240L437 252Z" fill="url(#gRed2)" filter="url(#bl2)"/><linearGradient id="sB" gradientUnits="userSpaceOnUse" x1="0" y1="188" x2="0" y2="252"><stop offset="0" stop-color="#c83c58" stop-opacity="0"/><stop offset="0.5" stop-color="#9a3090" stop-opacity="0.7"/><stop offset="1" stop-color="#3a18e0" stop-opacity="1"/></linearGradient><path d="M430.5 222L432.5 252" stroke="url(#sB)" stroke-width="3" fill="none" filter="url(#bl5)"/><path d="M423 232L424 252" stroke="url(#sB)" stroke-width="2" fill="none" filter="url(#bl5)" opacity="0.6"/><path d="M443.5 252.5L461 188" stroke="url(#sB)" stroke-width="4" fill="none" filter="url(#bl5)"/><path d="M445 252.5L464.5 182.6L466 182.6L473.9 199.6L476.7 220.4L472 231.7L469.2 246L462 253Z" fill="url(#gRed2)"/><path d="M470.1 247L502.3 183.5L505 184L507 205L508 256L472 256Z" fill="url(#gRed2)"/><path d="M510.5 183L515 183L518 240L519 258L512 257Z" fill="url(#gRed2)"/><path d="M521 187.4L548.7 188.5L522.7 261.9Z" fill="url(#gRed2)"/><path d="M551.5 188.6L577.5 189.5L577.5 219.3L565.2 219.3L564 232L553.4 222Z" fill="url(#gRed2)"/><path d="M395 240L410 252.5L447 253L470 256.5L540 262L582 262L582 275L360 258Z" fill="#e33c28"/><path d="M359.8 258.3L580.7 276.6L576.6 323.5L354.4 304.4L359.8 291.6Z" fill="url(#gFront)"/><path d="M588.3 203.5L580.7 276.6" stroke="#0a0af0" stroke-width="2"/><path d="M347.1 257.4L605 279" stroke="#222" stroke-width="0.8" fill="none"/><path d="M347.1 257.4L354.4 304.4" stroke="#333" stroke-width="0.7" fill="none"/><path d="M354.4 304.4L576.6 323.5" stroke="#d8d0a0" stroke-width="0.6" fill="none"/><path d="M594.9 159.1L576.6 323.5" stroke="#888" stroke-width="0.5" fill="none"/><path d="M347.1 257.4L334.1 256.6M348.6 266.9L335.6 266.1M350.0 276.4L337.0 275.6M351.5 285.8L338.5 285.0M353.0 295.2L340.0 294.4M354.4 304.4L341.4 303.6" stroke="#333" stroke-width="0.7" fill="none"/><path d="M354.40 304.40L349.73 316.70M363.29 305.16L360.53 312.66M372.18 305.93L369.51 313.43M381.06 306.69L378.48 314.19M389.95 307.46L387.46 314.96M398.84 308.22L394.90 320.52M407.73 308.98L405.42 316.48M416.62 309.75L414.40 317.25M425.50 310.51L423.37 318.01M434.39 311.28L432.35 318.78M443.28 312.04L440.08 324.34M452.17 312.80L450.31 320.30M461.06 313.57L459.29 321.07M469.94 314.33L468.26 321.83M478.83 315.10L477.24 322.60M487.72 315.86L485.26 328.16M496.61 316.62L495.20 324.12M505.50 317.39L504.18 324.89M514.38 318.15L513.15 325.65M523.27 318.92L522.13 326.42M532.16 319.68L530.44 331.98M541.05 320.44L540.09 327.94M549.94 321.21L549.07 328.71M558.82 321.97L558.04 329.47M567.71 322.74L567.02 330.24M576.60 323.50L575.62 335.80" stroke="#666" stroke-width="0.6" fill="none"/><path d="M580.70 276.60L605.00 278.79M581.27 271.90L597.60 273.36M581.84 267.20L597.98 268.62M582.40 262.50L598.36 263.89M582.97 257.80L598.75 259.16M583.54 253.10L606.46 255.06M584.11 248.40L599.51 249.70M584.68 243.70L599.89 244.98M585.24 239.00L600.27 240.25M585.81 234.30L600.65 235.52M586.38 229.60L607.92 231.35M586.95 224.90L601.41 226.06M587.52 220.20L601.79 221.33M588.08 215.50L602.17 216.61M588.65 210.80L602.55 211.88M589.22 206.10L609.38 207.65M589.79 201.40L603.31 202.43M590.36 196.70L603.69 197.70M590.92 192.00L604.07 192.97M591.49 187.30L604.45 188.25M592.06 182.60L610.84 183.96M592.63 177.90L605.21 178.80M593.20 173.20L605.59 174.08M593.76 168.50L605.97 169.35M594.33 163.80L606.35 164.63M594.90 159.10L612.30 160.28" stroke="#777" stroke-width="0.55" fill="none"/><rect x="638" y="91.5" width="11.5" height="95" fill="url(#gCbar)" stroke="#555" stroke-width="0.6"/><path d="M636 91.8H638M636 110.7H638M636 129.6H638M636 148.4H638M636 167.3H638M636 186.2H638" stroke="#555" stroke-width="0.5"/></svg>
<div class="t" style="right:418.9px;top:253.10000000000002px;font-size:10px;color:#111;-webkit-text-stroke:0.3px #111;transform:scaleX(0.95);transform-origin:right center">251</div>
<div class="t" style="right:416.3px;top:262.8px;font-size:10px;color:#111;-webkit-text-stroke:0.3px #111;transform:scaleX(0.95);transform-origin:right center">200.8</div>
<div class="t" style="right:415.1px;top:272.3px;font-size:10px;color:#111;-webkit-text-stroke:0.3px #111;transform:scaleX(0.95);transform-origin:right center">150.6</div>
<div class="t" style="right:412.8px;top:281.90000000000003px;font-size:10px;color:#111;-webkit-text-stroke:0.3px #111;transform:scaleX(0.95);transform-origin:right center">100.4</div>
<div class="t" style="right:410.8px;top:290.8px;font-size:10px;color:#111;-webkit-text-stroke:0.3px #111;transform:scaleX(0.95);transform-origin:right center">50.2</div>
<div class="t" style="right:408.9px;top:299.7px;font-size:10px;color:#111;-webkit-text-stroke:0.3px #111;transform:scaleX(0.95);transform-origin:right center">0</div>
<div class="t" style="left:346.8px;top:321.00px;font-size:10px;color:#111;;-webkit-text-stroke:0.3px #111;transform:scaleX(0.95);transform-origin:left center">1</div>
<div class="t" style="left:386.8px;top:324.60px;font-size:10px;color:#111;;-webkit-text-stroke:0.3px #111;transform:scaleX(0.95);transform-origin:left center">2.8</div>
<div class="t" style="left:430.8px;top:329.10px;font-size:10px;color:#111;;-webkit-text-stroke:0.3px #111;transform:scaleX(0.95);transform-origin:left center">4.6</div>
<div class="t" style="left:475.9px;top:332.30px;font-size:10px;color:#111;;-webkit-text-stroke:0.3px #111;transform:scaleX(0.95);transform-origin:left center">6.4</div>
<div class="t" style="left:521.4px;top:336.70px;font-size:10px;color:#111;;-webkit-text-stroke:0.3px #111;transform:scaleX(0.95);transform-origin:left center">8.2</div>
<div class="t" style="left:569.7px;top:340.70px;font-size:10px;color:#111;;-webkit-text-stroke:0.3px #111;transform:scaleX(0.95);transform-origin:left center">10</div>
<div class="t" style="left:616px;top:156.60px;font-size:10px;color:#111;;-webkit-text-stroke:0.3px #111;transform:scaleX(0.95);transform-origin:left center">10</div>
<div class="t" style="left:614.7px;top:177.30px;font-size:10px;color:#111;;-webkit-text-stroke:0.3px #111;transform:scaleX(0.95);transform-origin:left center">8.2</div>
<div class="t" style="left:613.9px;top:199.60px;font-size:10px;color:#111;;-webkit-text-stroke:0.3px #111;transform:scaleX(0.95);transform-origin:left center">6.4</div>
<div class="t" style="left:612.5px;top:223.30px;font-size:10px;color:#111;;-webkit-text-stroke:0.3px #111;transform:scaleX(0.95);transform-origin:left center">4.6</div>
<div class="t" style="left:611.2px;top:248.50px;font-size:10px;color:#111;;-webkit-text-stroke:0.3px #111;transform:scaleX(0.95);transform-origin:left center">2.8</div>
<div class="t" style="left:609.6px;top:275.40px;font-size:10px;color:#111;;-webkit-text-stroke:0.3px #111;transform:scaleX(0.95);transform-origin:left center">1</div>
<div class="t" style="left:448.4px;top:341.25px;font-size:8.5px;font-weight:bold;color:#111;;font-style:italic">X axis</div>
<div class="t" style="left:628.2px;top:210.25px;font-size:8.5px;font-weight:bold;color:#111;;font-style:italic">Y axis</div>
<div class="t" style="right:116px;top:89.6px;font-size:4.5px;font-weight:bold;color:#000">250</div>
<div class="t" style="right:116px;top:108.47999999999999px;font-size:4.5px;font-weight:bold;color:#000">200</div>
<div class="t" style="right:116px;top:127.36px;font-size:4.5px;font-weight:bold;color:#000">150</div>
<div class="t" style="right:116px;top:146.24px;font-size:4.5px;font-weight:bold;color:#000">100</div>
<div class="t" style="right:116px;top:165.12px;font-size:4.5px;font-weight:bold;color:#000">50</div>
<div class="t" style="right:116px;top:184.0px;font-size:4.5px;font-weight:bold;color:#000">0</div>
</body></html>
